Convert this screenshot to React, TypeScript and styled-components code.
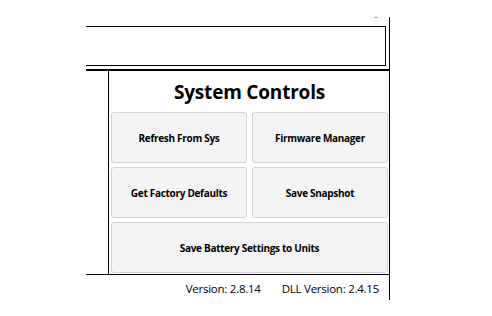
import React from "react";
import styled, { createGlobalStyle } from "styled-components";

const Global = createGlobalStyle`
  html, body { margin: 0; padding: 0; background: #ffffff; }
  body { font-family: "Open Sans", "Noto Sans", sans-serif; color: #000; }
`;

const Page = styled.div`
  padding: 17px 0 0 86px;
`;

const Frame = styled.div`
  position: relative;
  width: 303px;
  height: 283px;
  border-right: 1px solid #000;
  display: flex;
  flex-direction: column;
`;

const Tick = styled.span`
  position: absolute;
  top: 0;
  left: 288px;
  width: 4px;
  height: 1px;
  background: #a8a8a8;
`;

const TextBox = styled.div`
  margin: 9px 3px 0 0;
  height: 38px;
  border: 1px solid #000;
  border-left: none;
  background: #fff;
`;

const Lower = styled.div`
  margin-top: 3px;
  display: grid;
  grid-template-columns: 23px 1fr;
  border-top: 2px solid #000;
  border-bottom: 1px solid #000;
  height: 203px;
`;

const SideColumn = styled.div`
  border-right: 1px solid #000;
`;

const ControlsPanel = styled.div`
  display: flex;
  flex-direction: column;
  padding: 0 1px 1px 2px;
`;

const Title = styled.h2`
  margin: 0;
  height: 41px;
  display: flex;
  align-items: center;
  justify-content: center;
  font-size: 19px;
  font-weight: 700;
  letter-spacing: -0.2px;
  padding-top: 1px;
  box-sizing: border-box;
`;

const ButtonGrid = styled.div`
  display: grid;
  grid-template-columns: 1fr 1fr;
  grid-auto-rows: 51px;
  gap: 4px 5px;
`;

const ActionButton = styled.button<{ $wide?: boolean }>`
  grid-column: ${(p) => (p.$wide ? "1 / span 2" : "auto")};
  margin: 0;
  padding: 0;
  background: #f4f4f4;
  border: 1px solid #d4d4d4;
  border-radius: 3px;
  font-family: "Open Sans", "Noto Sans", sans-serif;
  font-size: 10px;
  font-weight: 700;
  color: #000;
  letter-spacing: -0.3px;
`;

const Footer = styled.div`
  flex: 1;
  display: flex;
  justify-content: flex-end;
  align-items: center;
  gap: 21px;
  padding: 1px 10px 0 0;
  font-size: 11.5px;
  letter-spacing: -0.25px;
`;

const FooterText = styled.span``;

export default function App() {
  return (
    <>
      <Global />
      <Page>
        <Frame>
          <Tick />
          <TextBox />
          <Lower>
            <SideColumn />
            <ControlsPanel>
              <Title>System Controls</Title>
              <ButtonGrid>
                <ActionButton>Refresh From Sys</ActionButton>
                <ActionButton>Firmware Manager</ActionButton>
                <ActionButton>Get Factory Defaults</ActionButton>
                <ActionButton>Save Snapshot</ActionButton>
                <ActionButton $wide>Save Battery Settings to Units</ActionButton>
              </ButtonGrid>
            </ControlsPanel>
          </Lower>
          <Footer>
            <FooterText>Version: 2.8.14</FooterText>
            <FooterText>DLL Version: 2.4.15</FooterText>
          </Footer>
        </Frame>
      </Page>
    </>
  );
}
